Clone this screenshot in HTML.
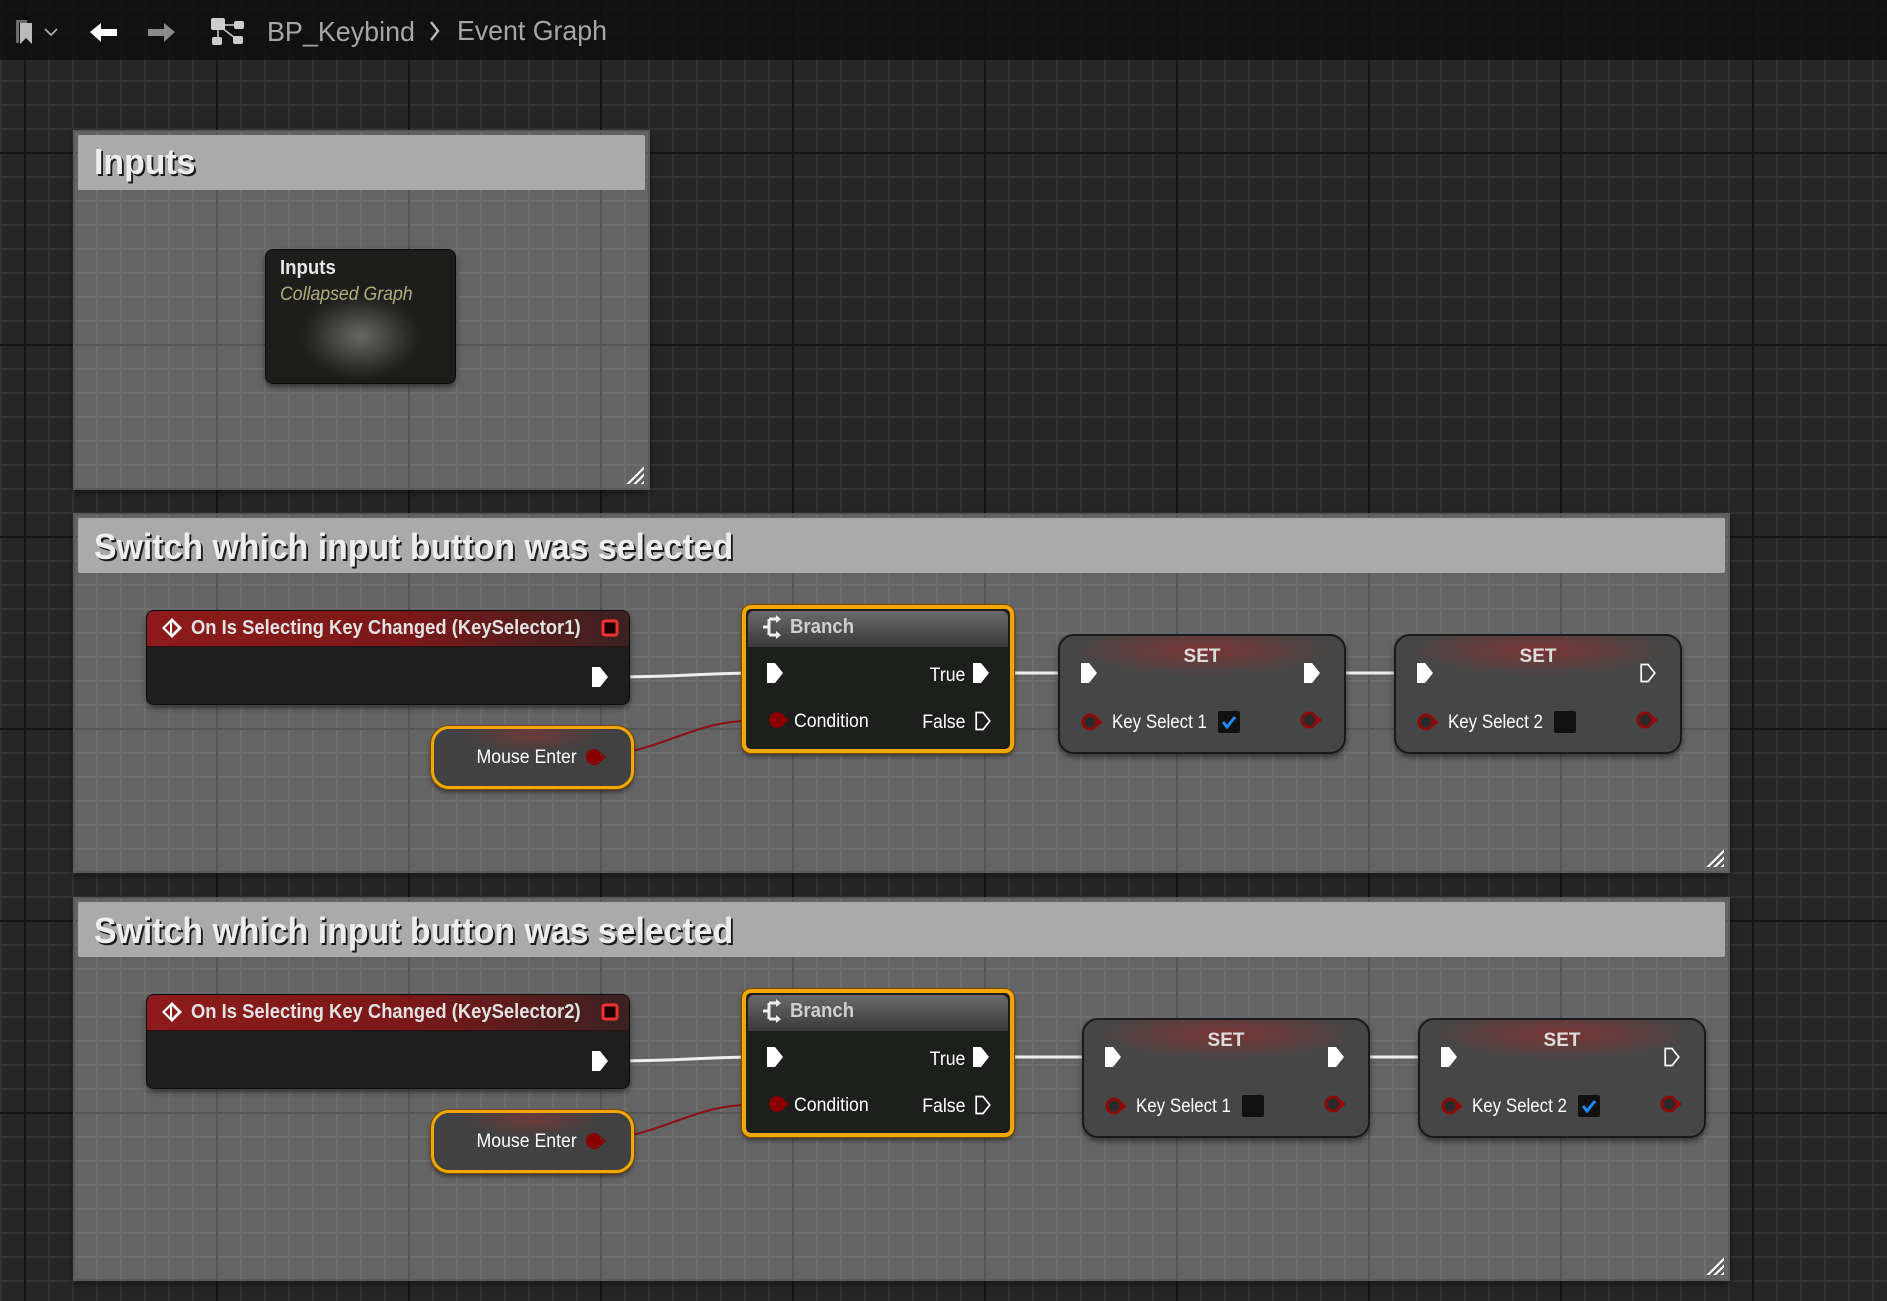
<!DOCTYPE html>
<html><head><meta charset="utf-8">
<style>
*{margin:0;padding:0;box-sizing:border-box}
html,body{width:1887px;height:1301px;overflow:hidden}
body{position:relative;font-family:"Liberation Sans",sans-serif;
background-color:#262626;
background-image:
linear-gradient(to right,#151515 2px,transparent 2px),
linear-gradient(to bottom,#151515 2px,transparent 2px),
linear-gradient(to right,#333 2px,transparent 2px),
linear-gradient(to bottom,#333 2px,transparent 2px);
background-size:192px 100%,100% 192px,24px 100%,100% 24px;
background-position:24px 0,0 152px,0 0,0 8px;}
.tb{position:absolute;left:0;top:0;width:1887px;height:60px;background:rgba(14,14,14,0.85)}
.cm{position:absolute;background-color:#646464;
background-image:
linear-gradient(to right,#565656 2px,transparent 2px),
linear-gradient(to bottom,#565656 2px,transparent 2px),
linear-gradient(to right,#6e6e6e 2px,transparent 2px),
linear-gradient(to bottom,#6e6e6e 2px,transparent 2px);
background-size:192px 100%,100% 192px,24px 100%,100% 24px;
background-position:24px 0,0 152px,0 0,0 8px;background-attachment:fixed;
box-shadow:0 3px 8px rgba(0,0,0,.5);border:2px solid #5a5a5a}
.ch{position:absolute;left:3px;right:3px;top:3px;height:55px;background:#aaa;border-radius:2px}
.ct{position:absolute;left:16px;top:8px;font-weight:bold;font-size:36px;color:#eee;white-space:nowrap;
text-shadow:2px 2px 0 #1a1a1a;transform:scaleX(.94);transform-origin:left}
.rh{position:absolute;right:4px;bottom:4px;width:18px;height:18px;
background:repeating-linear-gradient(135deg,transparent 0 3px,#fff 3px 5px);clip-path:polygon(100% 0,100% 100%,0 100%)}
.n{position:absolute;color:#fff;font-size:19px;white-space:nowrap}
.t{display:inline-block;transform:scaleX(.93);transform-origin:left}
.t.r{transform-origin:right}
.t.k{transform:scaleX(.89)}
svg{position:absolute;left:0;top:0;overflow:visible}
</style></head><body>

<div class="tb"></div>
<svg width="1887" height="60" style="z-index:2">
 <path d="M16 20h11v3h-8v20h-3z" fill="#6a6a6a"/>
 <path d="M20 23h12v21l-6-6-6 6z" fill="#bbb"/>
 <path d="M45 29l6 6 6-6" stroke="#aaa" stroke-width="1.8" fill="none"/>
 <path d="M90 32l11-9v6h16v7h-16v6z" fill="#fff"/>
 <path d="M175 32l-11-9v6h-16v7h16v6z" fill="#8a8a8a"/>
 <rect x="211" y="18" width="14" height="12" rx="2" fill="#ccc"/>
 <rect x="234" y="21" width="10" height="8" rx="2" fill="#ccc"/>
 <rect x="212" y="37" width="10" height="8" rx="2" fill="#ccc"/>
 <rect x="233" y="36" width="10" height="8" rx="2" fill="#ccc"/>
 <path d="M218 30v8M222 28l13 10M224 25h10" stroke="#ccc" stroke-width="1.5"/>
 <text x="267" y="41" font-family="Liberation Sans" font-size="28" fill="#a6a6a6" textLength="148" lengthAdjust="spacingAndGlyphs">BP_Keybind</text>
 <path d="M431 22l7 9-7 9" stroke="#bbb" stroke-width="2.4" fill="none"/>
 <text x="457" y="40" font-family="Liberation Sans" font-size="28" fill="#a6a6a6" textLength="150" lengthAdjust="spacingAndGlyphs">Event Graph</text>
</svg>

<div class="cm" style="left:73px;top:130px;width:577px;height:360px">
 <div class="ch"><div class="ct" style="top:6px">Inputs</div></div>
 <div class="rh"></div>
</div>
<div class="n" style="left:265px;top:249px;width:191px;height:135px;border-radius:8px;border:1px solid #0a0a0a;
background:radial-gradient(ellipse 60px 42px at 50% 65%,#666864,#2a2b29 80%,#1d1e1c);box-shadow:0 3px 6px rgba(0,0,0,.5)">
 <div style="position:absolute;left:14px;top:7px;font-size:20px;font-weight:bold;color:#e6e6e6"><span class="t">Inputs</span></div>
 <div style="position:absolute;left:14px;top:34px;font-size:19px;font-style:italic;color:#b0ad7c"><span class="t">Collapsed Graph</span></div>
</div>

<div class="cm" style="left:73px;top:513px;width:1657px;height:360px">
 <div class="ch"><div class="ct">Switch which input button was selected</div></div>
 <div class="rh"></div>
</div>
<div class="cm" style="left:73px;top:897px;width:1657px;height:384px">
 <div class="ch"><div class="ct">Switch which input button was selected</div></div>
 <div class="rh"></div>
</div>

<div style="position:absolute;left:0;top:0;width:1887px;height:1301px">
<svg width="1887" height="1301">
 <path d="M610 677 C680 677 700 673 765 673" stroke="#eee" stroke-width="3" fill="none"/>
 <path d="M602 757 C680 745 690 720 765 720" stroke="#8b1010" stroke-width="2" fill="none"/>
 <path d="M995 673 L1080 673" stroke="#eee" stroke-width="3"/>
 <path d="M1322 673 L1414 673" stroke="#eee" stroke-width="3"/>
 <path d="M610 1061 C680 1061 700 1057 765 1057" stroke="#eee" stroke-width="3" fill="none"/>
 <path d="M602 1141 C680 1129 690 1104 765 1104" stroke="#8b1010" stroke-width="2" fill="none"/>
 <path d="M995 1057 L1104 1057" stroke="#eee" stroke-width="3"/>
 <path d="M1346 1057 L1438 1057" stroke="#eee" stroke-width="3"/>
</svg>

<div class="n" style="left:146px;top:610px;width:484px;height:95px;border-radius:8px;background:#1d1e1d;border:1px solid #0b0b0b;box-shadow:0 3px 6px rgba(0,0,0,.5);overflow:hidden">
 <div style="height:36px;background:linear-gradient(to right,#8e1b1b,#7a1818 55%,#3a2222);border-bottom:1px solid #2a1010"></div>
 <div style="position:absolute;left:44px;top:6px;font-size:20px;font-weight:bold;color:#e2e2e2"><span class="t" style="transform:scaleX(.92)">On Is Selecting Key Changed (KeySelector1)</span></div>
</div>
<div class="n" style="left:146px;top:994px;width:484px;height:95px;border-radius:8px;background:#1d1e1d;border:1px solid #0b0b0b;box-shadow:0 3px 6px rgba(0,0,0,.5);overflow:hidden">
 <div style="height:36px;background:linear-gradient(to right,#8e1b1b,#7a1818 55%,#3a2222);border-bottom:1px solid #2a1010"></div>
 <div style="position:absolute;left:44px;top:6px;font-size:20px;font-weight:bold;color:#e2e2e2"><span class="t" style="transform:scaleX(.92)">On Is Selecting Key Changed (KeySelector2)</span></div>
</div>

<div class="n" style="left:431px;top:726px;width:203px;height:63px;border-radius:18px;border:3px solid #f0a800;box-shadow:0 0 0 1px #7a4a00,0 3px 5px rgba(0,0,0,.5);background:radial-gradient(ellipse 90px 22px at 50% 10%,#6e3a3a,#414141 80%)">
 <div style="position:absolute;right:54px;top:18px"><span class="t r">Mouse Enter</span></div>
</div>
<div class="n" style="left:431px;top:1110px;width:203px;height:63px;border-radius:18px;border:3px solid #f0a800;box-shadow:0 0 0 1px #7a4a00,0 3px 5px rgba(0,0,0,.5);background:radial-gradient(ellipse 90px 22px at 50% 10%,#6e3a3a,#414141 80%)">
 <div style="position:absolute;right:54px;top:18px"><span class="t r">Mouse Enter</span></div>
</div>

<div class="n" style="left:742px;top:605px;width:272px;height:148px;border-radius:9px;border:4px solid #f0a800;box-shadow:0 0 0 1px #7a4a00,0 3px 5px rgba(0,0,0,.5);background:#1d1f1d;overflow:hidden">
 <div style="height:36px;background:linear-gradient(to bottom,#6a6a6a,#3a3a3a);margin:2px;border-radius:6px 6px 0 0"></div>
 <div style="position:absolute;left:44px;top:7px;font-size:20px;font-weight:bold;color:#cfcfcf"><span class="t">Branch</span></div>
 <div style="position:absolute;right:45px;top:56px"><span class="t r">True</span></div>
 <div style="position:absolute;left:48px;top:102px"><span class="t">Condition</span></div>
 <div style="position:absolute;right:45px;top:103px"><span class="t r">False</span></div>
</div>
<div class="n" style="left:742px;top:989px;width:272px;height:148px;border-radius:9px;border:4px solid #f0a800;box-shadow:0 0 0 1px #7a4a00,0 3px 5px rgba(0,0,0,.5);background:#1d1f1d;overflow:hidden">
 <div style="height:36px;background:linear-gradient(to bottom,#6a6a6a,#3a3a3a);margin:2px;border-radius:6px 6px 0 0"></div>
 <div style="position:absolute;left:44px;top:7px;font-size:20px;font-weight:bold;color:#cfcfcf"><span class="t">Branch</span></div>
 <div style="position:absolute;right:45px;top:56px"><span class="t r">True</span></div>
 <div style="position:absolute;left:48px;top:102px"><span class="t">Condition</span></div>
 <div style="position:absolute;right:45px;top:103px"><span class="t r">False</span></div>
</div>

<div class="n" style="left:1058px;top:634px;width:288px;height:120px;border-radius:16px;border:2px solid #1a1a1a;box-shadow:0 3px 6px rgba(0,0,0,.5);background:radial-gradient(ellipse 130px 26px at 50% 12%,#7a3434,rgba(70,70,70,0) 100%),#464646">
 <div style="position:absolute;left:0;right:0;top:10px;text-align:center;font-size:19px;font-weight:bold;color:#ddd">SET</div>
 <div style="position:absolute;left:52px;top:76px"><span class="t k">Key Select 1</span></div>
</div>
<div class="n" style="left:1394px;top:634px;width:288px;height:120px;border-radius:16px;border:2px solid #1a1a1a;box-shadow:0 3px 6px rgba(0,0,0,.5);background:radial-gradient(ellipse 130px 26px at 50% 12%,#7a3434,rgba(70,70,70,0) 100%),#464646">
 <div style="position:absolute;left:0;right:0;top:10px;text-align:center;font-size:19px;font-weight:bold;color:#ddd">SET</div>
 <div style="position:absolute;left:52px;top:76px"><span class="t k">Key Select 2</span></div>
</div>
<div class="n" style="left:1082px;top:1018px;width:288px;height:120px;border-radius:16px;border:2px solid #1a1a1a;box-shadow:0 3px 6px rgba(0,0,0,.5);background:radial-gradient(ellipse 130px 26px at 50% 12%,#7a3434,rgba(70,70,70,0) 100%),#464646">
 <div style="position:absolute;left:0;right:0;top:10px;text-align:center;font-size:19px;font-weight:bold;color:#ddd">SET</div>
 <div style="position:absolute;left:52px;top:76px"><span class="t k">Key Select 1</span></div>
</div>
<div class="n" style="left:1418px;top:1018px;width:288px;height:120px;border-radius:16px;border:2px solid #1a1a1a;box-shadow:0 3px 6px rgba(0,0,0,.5);background:radial-gradient(ellipse 130px 26px at 50% 12%,#7a3434,rgba(70,70,70,0) 100%),#464646">
 <div style="position:absolute;left:0;right:0;top:10px;text-align:center;font-size:19px;font-weight:bold;color:#ddd">SET</div>
 <div style="position:absolute;left:52px;top:76px"><span class="t k">Key Select 2</span></div>
</div>

<svg width="1887" height="1301">
 <defs>
  <path id="ex" d="M-8 -10h8l8 10-8 10h-8z"/>
  <g id="ef"><use href="#ex" fill="#fff"/></g>
  <g id="eo"><use href="#ex" fill="none" stroke="#fff" stroke-width="2" transform="scale(.85)"/></g>
  <g id="df"><circle r="8" fill="#8a0000"/><path d="M7 -4l5 4-5 4z" fill="#8a0000"/></g>
  <g id="do"><circle r="7" fill="#2a2a2a" stroke="#8e0a0a" stroke-width="3"/><path d="M8 -4l5 4-5 4z" fill="#8e0a0a"/></g>
  <g id="ev"><path d="M0 -10l10 10-10 10-10-10z" fill="#fff"/><path d="M0 -6l6 6-6 6z" fill="#8e1b1b"/><path d="M-2 -5l-5 5 5 5z" fill="#8e1b1b"/></g>
  <g id="br"><path d="M-9 0h6M-3 -8v16M-3 -8h8M-3 8h8" stroke="#eee" stroke-width="3" fill="none"/><path d="M4 -12l5 4-5 4zM4 4l5 4-5 4z" fill="#eee"/></g>
  <g id="sq"><rect x="-7" y="-7" width="14" height="14" rx="2" fill="#1a0000" stroke="#f23030" stroke-width="3"/></g>
  <g id="cbY"><rect x="-11" y="-11" width="22" height="22" rx="2" fill="#111"/><path d="M-6 0l4 5 8-10" stroke="#1e8cff" stroke-width="3" fill="none"/></g>
  <g id="cbN"><rect x="-11" y="-11" width="22" height="22" rx="2" fill="#111"/></g>
 </defs>
 <use href="#ev" x="172" y="628"/><use href="#sq" x="610" y="628"/>
 <use href="#ef" x="600" y="677"/>
 <use href="#df" x="594" y="757"/>
 <use href="#br" x="772" y="627"/>
 <use href="#ef" x="775" y="673"/><use href="#ef" x="981" y="673"/>
 <use href="#df" x="777" y="720"/><use href="#eo" x="983" y="721"/>
 <use href="#ef" x="1089" y="673"/><use href="#ef" x="1312" y="673"/>
 <use href="#do" x="1090" y="722"/><use href="#do" x="1309" y="720"/>
 <use href="#cbY" x="1229" y="722"/>
 <use href="#ef" x="1425" y="673"/><use href="#eo" x="1648" y="673"/>
 <use href="#do" x="1426" y="722"/><use href="#do" x="1645" y="720"/>
 <use href="#cbN" x="1565" y="722"/>
 <use href="#ev" x="172" y="1012"/><use href="#sq" x="610" y="1012"/>
 <use href="#ef" x="600" y="1061"/>
 <use href="#df" x="594" y="1141"/>
 <use href="#br" x="772" y="1011"/>
 <use href="#ef" x="775" y="1057"/><use href="#ef" x="981" y="1057"/>
 <use href="#df" x="777" y="1104"/><use href="#eo" x="983" y="1105"/>
 <use href="#ef" x="1113" y="1057"/><use href="#ef" x="1336" y="1057"/>
 <use href="#do" x="1114" y="1106"/><use href="#do" x="1333" y="1104"/>
 <use href="#cbN" x="1253" y="1106"/>
 <use href="#ef" x="1449" y="1057"/><use href="#eo" x="1672" y="1057"/>
 <use href="#do" x="1450" y="1106"/><use href="#do" x="1669" y="1104"/>
 <use href="#cbY" x="1589" y="1106"/>
</svg>
</div>
</body></html>
